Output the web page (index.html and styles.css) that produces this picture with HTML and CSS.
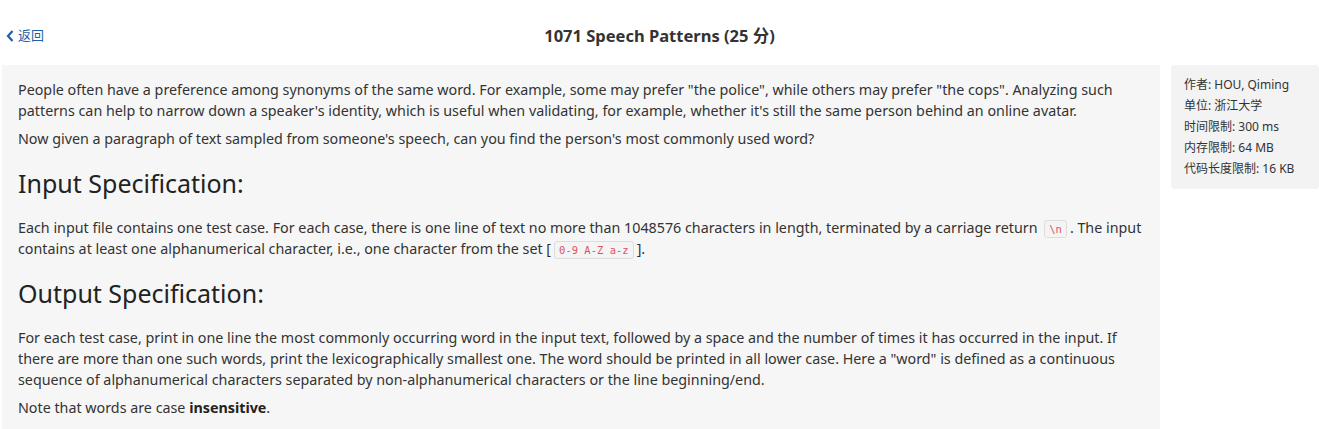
FILE: index.html
```html
<!DOCTYPE html>
<html lang="zh-CN">
<head>
<meta charset="utf-8">
<title>1071 Speech Patterns</title>
<link rel="stylesheet" href="styles.css">
</head>
<body>
<header class="topbar">
  <a class="back" href="#"><svg class="back-icon" viewBox="0 0 8 12" width="8" height="12"><path d="M6.5 1 L2 6 L6.5 11" fill="none" stroke="#1f5fa8" stroke-width="2.2"/></svg>返回</a>
  <h1 class="title">1071 Speech Patterns (25 分)</h1>
  <span class="spacer"></span>
</header>
<div class="layout">
  <main class="problem">
    <p>People often have a preference among synonyms of the same word. For example, some may prefer "the police", while others may prefer "the cops". Analyzing such patterns can help to narrow down a speaker's identity, which is useful when validating, for example, whether it's still the same person behind an online avatar.</p>
    <p>Now given a paragraph of text sampled from someone's speech, can you find the person's most commonly used word?</p>
    <h2>Input Specification:</h2>
    <p>Each input file contains one test case. For each case, there is one line of text no more than 1048576 characters in length, terminated by a carriage return <code>\n</code>. The input contains at least one alphanumerical character, i.e., one character from the set [<code>0-9 A-Z a-z</code>].</p>
    <h2>Output Specification:</h2>
    <p>For each test case, print in one line the most commonly occurring word in the input text, followed by a space and the number of times it has occurred in the input. If there are more than one such words, print the lexicographically smallest one. The word should be printed in all lower case. Here a "word" is defined as a continuous sequence of alphanumerical characters separated by non-alphanumerical characters or the line beginning/end.</p>
    <p>Note that words are case <strong>insensitive</strong>.</p>
  </main>
  <aside class="info">
    <div>作者: HOU, Qiming</div>
    <div>单位: 浙江大学</div>
    <div>时间限制: 300 ms</div>
    <div>内存限制: 64 MB</div>
    <div>代码长度限制: 16 KB</div>
  </aside>
</div>
</body>
</html>
```
FILE: styles.css
```css
* { box-sizing: border-box; }
html, body { margin: 0; padding: 0; background: #fff; }
body {
  font-family: "Noto Sans", "Noto Sans CJK SC", sans-serif;
  color: #333;
  font-size: 14.3px;
  line-height: 21px;
}
.topbar {
  display: flex;
  align-items: center;
  height: 65px;
  padding: 6px 6px 0 6px;
}
.back {
  width: 120px;
  display: flex;
  align-items: center;
  gap: 4px;
  color: #1f5fa8;
  text-decoration: none;
  font-size: 13px;
}
.back-icon { display: block; }
.title {
  flex: 1;
  text-align: center;
  margin: 0;
  font-size: 16.5px;
  font-weight: 700;
  color: #333;
}
.spacer { width: 120px; }
.layout {
  display: flex;
  align-items: flex-start;
  gap: 11px;
  padding-left: 2px;
}
.problem {
  width: 1158px;
  background: #f6f6f6;
  padding: 14px 16px 8px 16px;
}
.problem p { margin: 0 0 7px 0; }
.problem h2 {
  font-size: 25px;
  font-weight: 400;
  line-height: 36px;
  margin: 16px 0 16px 0;
  color: #222;
}
code {
  font-family: "DejaVu Sans Mono", monospace;
  font-size: 10.5px;
  line-height: 1;
  color: #e0515f;
  background: #f4f4f4;
  border: 1px solid #dddddd;
  border-radius: 3px;
  padding: 2px 4px;
  margin: 0 3px;
}
strong { font-weight: 700; color: #222; }
.info {
  flex: 1;
  background: #f3f3f3;
  border-radius: 4px;
  padding: 9px 12px 10px 13px;
  font-size: 12px;
  line-height: 21px;
  color: #333;
}
```
